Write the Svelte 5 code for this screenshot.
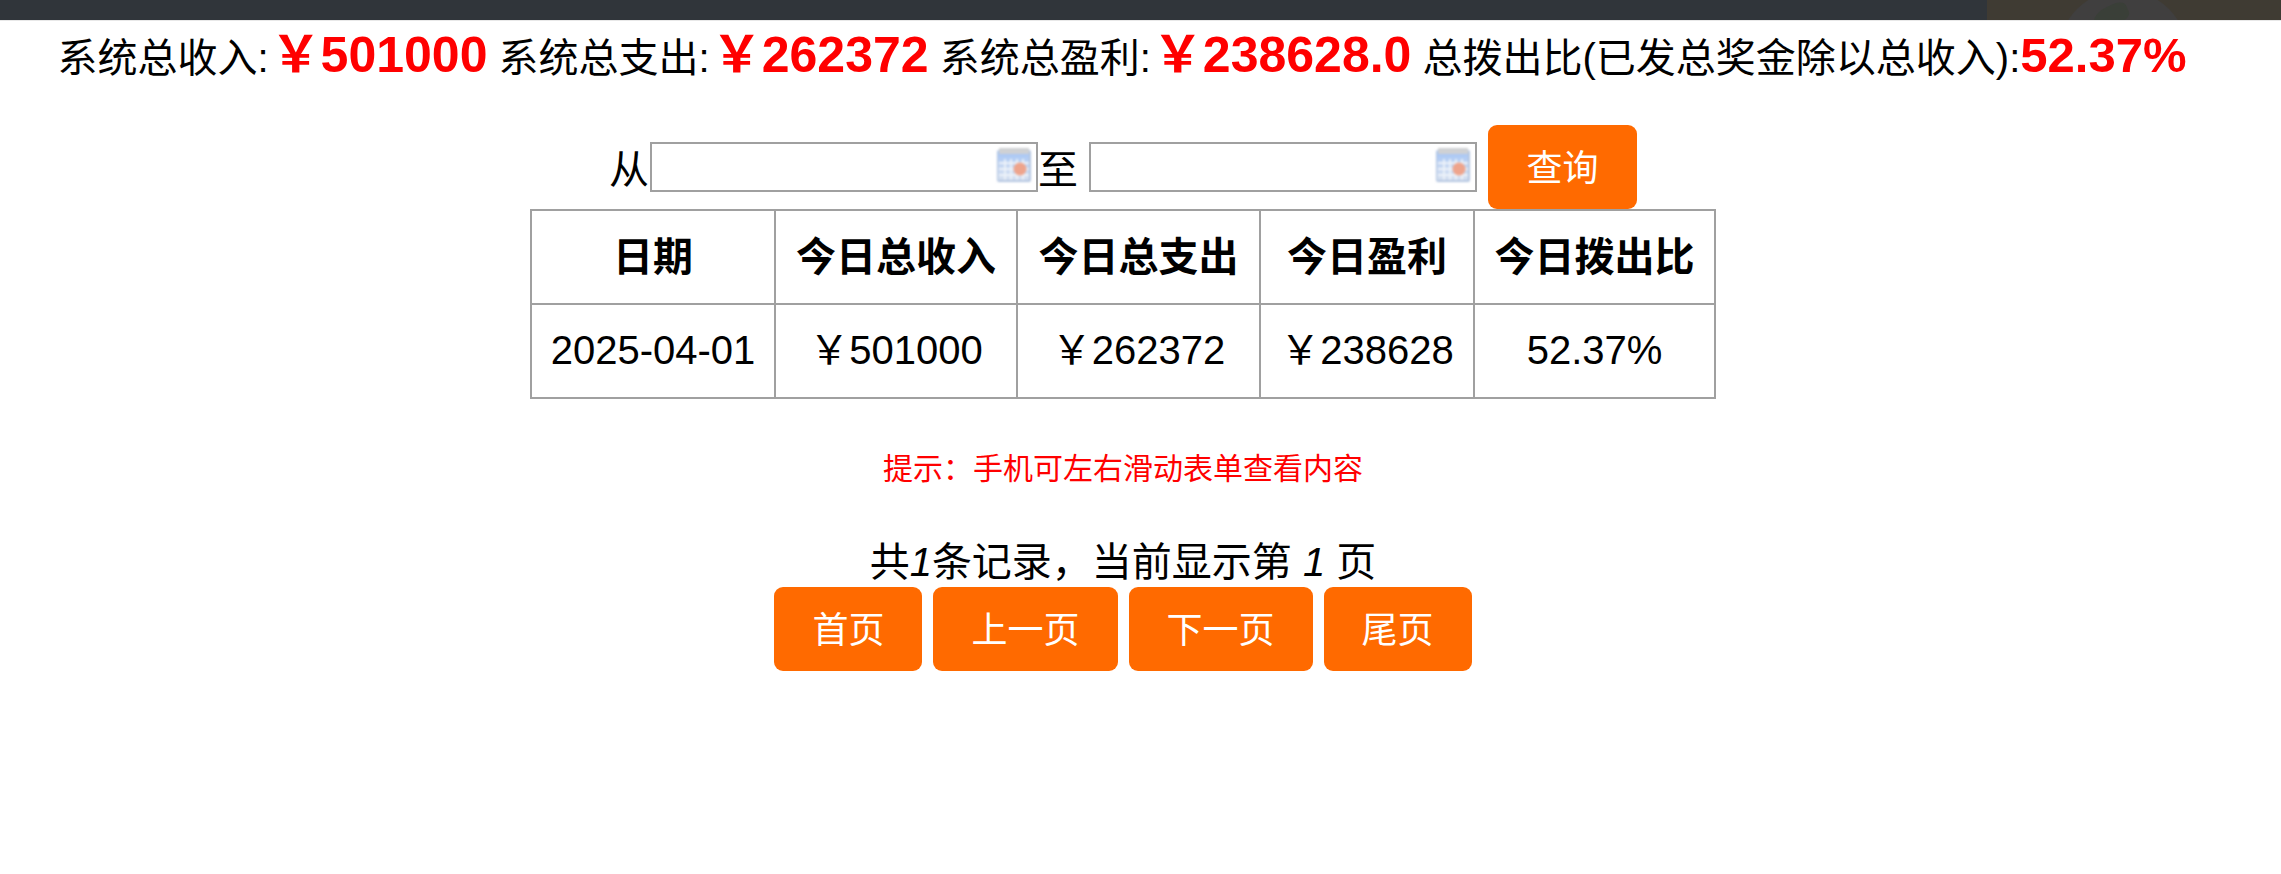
<script>
  const stats = [
    { label: '系统总收入:', value: '￥501000' },
    { label: '系统总支出:', value: '￥262372' },
    { label: '系统总盈利:', value: '￥238628.0' }
  ];
  const headers = ['日期', '今日总收入', '今日总支出', '今日盈利', '今日拨出比'];
  const row = ['2025-04-01', '￥501000', '￥262372', '￥238628', '52.37%'];
  const pages = ['首页', '上一页', '下一页', '尾页'];
</script>

{#snippet calendar()}
  <svg class="cal" viewBox="0 0 34 34" aria-hidden="true">
    <defs>
      <linearGradient id="calbg" x1="0" y1="0" x2="0" y2="1">
        <stop offset="0" stop-color="#a3c4f6" />
        <stop offset="0.5" stop-color="#c4d6f2" />
        <stop offset="1" stop-color="#d5e0f0" />
      </linearGradient>
    </defs>
    <rect x="0" y="2" width="34" height="32" rx="2" fill="#b3c5e0" />
    <rect x="1" y="3" width="31" height="29" fill="url(#calbg)" />
    <rect x="2" y="0" width="30" height="6" fill="#cfd1d4" />
    <path d="M2 15H32M2 21H32M2 27H32M8 11V32M14 11V32M20 11V32M26 11V32" stroke="#eef3fa" stroke-width="1.8" />
    <circle cx="23" cy="21" r="6.5" fill="#eea48c" />
  </svg>
{/snippet}

<div class="topbar">
  <div class="topbar-corner">
    <span class="disc"></span>
    <span class="leaf"></span>
  </div>
</div>

<main class="page">
  <p class="summary">
    {#each stats as s}
      {s.label}<strong>{s.value}</strong>{' '}
    {/each}
    总拨出比(已发总奖金除以总收入):<strong class="rate">52.37%</strong>
  </p>

  <form class="filter" onsubmit={(e) => e.preventDefault()}>
    <span>从</span><span class="field first"><input type="text" />{@render calendar()}</span><span>至</span>
    <span class="field second"><input type="text" />{@render calendar()}</span>
    <button class="btn search" type="submit">查询</button>
  </form>

  <table>
    <thead>
      <tr>
        {#each headers as h}<th>{h}</th>{/each}
      </tr>
    </thead>
    <tbody>
      <tr>
        {#each row as c}<td>{c}</td>{/each}
      </tr>
    </tbody>
  </table>

  <p class="hint">提示：手机可左右滑动表单查看内容</p>

  <p class="count">共<i>1</i>条记录，当前显示第 <i>1</i> 页</p>
  <nav class="pager">
    {#each pages as p}<button class="btn" type="button">{p}</button>{/each}
  </nav>
</main>

<style>
  :global(body) {
    margin: 0;
    background: #fff;
    color: #000;
    font-family: "Liberation Sans", "Noto Sans CJK SC", sans-serif;
  }
  .topbar {
    height: 20px;
    background: #30353a;
    border-bottom: 1px solid #e8e8e8;
    display: flex;
    justify-content: flex-end;
  }
  .topbar-corner {
    position: relative;
    width: 294px;
    overflow: hidden;
    background: #3f3b33;
  }
  .disc {
    position: absolute;
    left: 71px;
    top: -10px;
    width: 130px;
    height: 130px;
    border-radius: 50%;
    background: #403f3f;
  }
  .leaf {
    position: absolute;
    left: 106px;
    top: 6px;
    width: 36px;
    height: 20px;
    border-radius: 60% 40% 40% 60%;
    transform: rotate(-25deg);
    background: #3a3f38;
  }
  .page {
    width: 2246px;
    text-align: center;
    font-size: 40px;
  }
  .summary {
    margin: 0 2px 0 0;
    height: 72px;
    line-height: 68px;
    white-space: nowrap;
  }
  .summary strong {
    color: #f00;
    font-size: 50px;
    margin-left: 2px;
  }
  .summary .rate {
    font-size: 49px;
    margin-left: 0;
  }
  .filter {
    margin: 0;
    padding-top: 32px;
    display: flex;
    justify-content: center;
    align-items: center;
    height: 84px;
  }
  .field {
    position: relative;
    display: block;
    width: 388px;
    height: 50px;
  }
  .field.first {
    margin-left: 1px;
  }
  .field.second {
    margin-left: 11px;
    margin-right: 11px;
  }
  input {
    display: block;
    box-sizing: border-box;
    width: 100%;
    height: 100%;
    border: 2px solid #a0a0a0;
    background: #fff;
    padding: 0;
    outline: none;
  }
  .cal {
    position: absolute;
    right: 7px;
    top: 6px;
    width: 34px;
    height: 34px;
    filter: blur(0.9px);
  }
  .btn {
    border: none;
    background: #ff6a00;
    color: #fff;
    font: inherit;
    font-size: 36px;
    height: 84px;
    padding: 0 38px 4px;
    border-radius: 9px;
    cursor: pointer;
  }
  .search {
    width: 149px;
    padding: 0 0 4px;
  }
  table {
    border-collapse: collapse;
    margin: 0 auto;
    table-layout: fixed;
    width: 1186px;
  }
  th, td {
    box-sizing: border-box;
    border: 2px solid #a0a0a0;
    padding: 0;
    height: 94px;
    line-height: 46px;
    font-size: 40px;
  }
  td { padding-bottom: 2px; }
  th { font-weight: bold; }
  th:nth-child(1) { width: 244px; }
  th:nth-child(2) { width: 242px; }
  th:nth-child(3) { width: 243px; }
  th:nth-child(4) { width: 214px; }
  .hint {
    margin: 0;
    padding-top: 50px;
    font-size: 30px;
    line-height: 40px;
    color: #f00;
  }
  .count {
    margin: 0;
    padding-top: 48px;
    line-height: 50px;
  }
  .pager {
    display: flex;
    justify-content: center;
    gap: 11px;
  }
</style>
